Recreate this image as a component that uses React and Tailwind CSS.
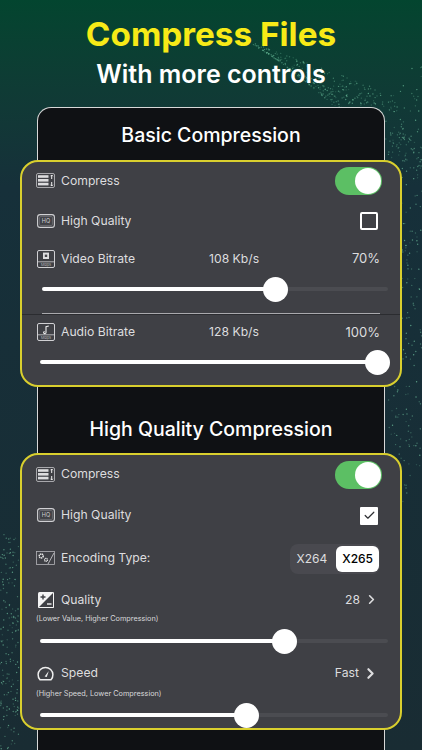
import { ChevronRight, Check } from 'lucide-react';

// Particle wave behind the phone frame
function makeDots() {
  const dots = [];
  const rnd = (n) => {
    const v = Math.sin(n * 127.1) * 43758.5453;
    return v - Math.floor(v);
  };
  for (let i = 0; i < 420; i++) {
    const t = rnd(i);
    const off = rnd(i + 500);
    // upper fan, runs from the title down to the right edge
    dots.push({
      x: 245 + t * 150 + off * 35,
      y: 40 + t * 55 + off * 70 * (0.3 + t),
      o: 0.15 + rnd(i + 900) * 0.4,
    });
  }
  for (let i = 0; i < 260; i++) {
    const t = rnd(i + 1300);
    const off = rnd(i + 1700);
    // right margin
    dots.push({
      x: 388 + off * 34,
      y: 110 + t * 420 - off * 60,
      o: 0.2 + rnd(i + 2100) * 0.45,
    });
  }
  for (let i = 0; i < 170; i++) {
    const t = rnd(i + 2600);
    const off = rnd(i + 3000);
    // left margin
    dots.push({
      x: off * 19,
      y: 530 + t * 220,
      o: 0.2 + rnd(i + 3400) * 0.45,
    });
  }
  return dots;
}

const DOTS = makeDots();

function CompressIcon() {
  return (
    <svg width="19" height="15" viewBox="0 0 19 15" fill="none" className="shrink-0">
      <rect x="0.5" y="0.5" width="18" height="14" rx="1.5" stroke="#b4b4b8" strokeWidth="0.9" />
      <rect x="2" y="2.2" width="10.5" height="2.6" fill="#dcdcde" />
      <rect x="2" y="6" width="10.5" height="2.6" fill="#dcdcde" />
      <rect x="2" y="9.8" width="10.5" height="2.6" fill="#dcdcde" />
      <path d="M15.7 2v4M14.6 3.2l1.1-1.2 1.1 1.2M15.7 9v4M14.6 11.8l1.1 1.2 1.1-1.2" stroke="#eee" strokeWidth="1" />
    </svg>
  );
}

function HqIcon() {
  return (
    <svg width="18" height="14" viewBox="0 0 18 14" fill="none" className="shrink-0">
      <rect x="0.6" y="0.6" width="16.8" height="12.8" rx="2.5" stroke="#d0d0d3" strokeWidth="1.1" />
      <rect x="2.6" y="2.6" width="12.8" height="8.8" rx="1" stroke="#85858a" strokeWidth="0.6" />
      <text x="9" y="9" textAnchor="middle" fontSize="5.5" fill="#d0d0d3" fontFamily="Inter, sans-serif">HQ</text>
    </svg>
  );
}

function BitrateIcon({ audio }) {
  return (
    <svg width="18" height="18" viewBox="0 0 18 18" fill="none" className="shrink-0">
      <rect x="0.5" y="0.5" width="17" height="17" rx="1.5" stroke="#d0d0d3" strokeWidth="1" />
      <path d="M0.5 11.8h17" stroke="#d0d0d3" strokeWidth="0.8" />
      {audio ? (
        <path d="M9 9.5V3.6l2.8-.6M9 9.5a1.2 1 0 1 1-1.3-.9" stroke="#eee" strokeWidth="1.1" />
      ) : (
        <>
          <rect x="6" y="2.6" width="6" height="6.4" fill="#dedee0" />
          <rect x="7.8" y="4.6" width="2.4" height="2.4" fill="#47474b" />
        </>
      )}
      <text x="9" y="16.2" textAnchor="middle" fontSize="3.8" fill="#b4b4b8" fontFamily="Inter, sans-serif">Mbps</text>
    </svg>
  );
}

function EncodingIcon() {
  return (
    <svg width="19" height="14" viewBox="0 0 19 14" fill="none" className="shrink-0">
      <rect x="0.5" y="0.5" width="18" height="13" stroke="#b4b4b8" strokeWidth="0.8" />
      <circle cx="5.2" cy="5" r="2" stroke="#eee" strokeWidth="1.5" strokeDasharray="1.3 0.5" />
      <circle cx="10" cy="8.8" r="1.5" stroke="#eee" strokeWidth="1.2" strokeDasharray="1 0.4" />
      <path d="M12 13 18 2" stroke="#c4c4c7" strokeWidth="0.9" />
    </svg>
  );
}

function QualityIcon() {
  return (
    <svg width="16" height="16" viewBox="0 0 16 16" fill="none" className="shrink-0">
      <rect width="16" height="16" rx="1.5" fill="#f4f4f4" />
      <path d="M0.5 15.5 15.5 0.5V15.5Z" fill="#3f4045" />
      <path d="M15.5 0.5V15.5H0.5" stroke="#f4f4f4" strokeWidth="1" />
      <path d="M2.5 5h5M5 2.5v5" stroke="#3f4045" strokeWidth="1.4" />
      <path d="M9 12h4.5" stroke="#f4f4f4" strokeWidth="1.4" />
    </svg>
  );
}

function SpeedIcon() {
  return (
    <svg width="17" height="15" viewBox="0 0 17 15" fill="none" className="shrink-0">
      <path d="M3 13.8A7.4 7.4 0 1 1 14 13.8Z" stroke="#eee" strokeWidth="1.5" strokeLinejoin="round" />
      <path d="M7.6 10.4 11.8 5l-2 6z" fill="#eee" />
    </svg>
  );
}

function Toggle() {
  return (
    <div className="w-[47px] h-[28px] rounded-full bg-[#5cbf64] flex items-center justify-end pr-[1px]">
      <div className="w-[26px] h-[26px] rounded-full bg-white" />
    </div>
  );
}

function Row({ icon, label, className, children }) {
  return (
    <div className={`flex items-center justify-between pl-[14px] pr-[18px] ${className}`}>
      <div className="flex items-center gap-[6px]">
        <div className="w-[19px] flex justify-center">{icon}</div>
        <span className="text-[12.2px] text-[#dddddf]">{label}</span>
      </div>
      {children}
    </div>
  );
}

function Slider({ fill, rest, className }) {
  return (
    <div className={`flex items-center h-[26px] ${className}`}>
      <div className={`h-[4px] bg-white rounded-l-full ${fill}`} />
      <div className="w-[25px] h-[25px] rounded-full bg-white shrink-0 -mx-[1px] z-10" />
      {rest && <div className={`h-[4px] bg-[#4b4c51] rounded-r-full ${rest}`} />}
    </div>
  );
}

function Panel({ className, children }) {
  return (
    <div className={`-mx-[18px] rounded-[18px] border-2 border-[#d9cf2e] bg-[#3f4045] relative ${className}`}>
      {children}
    </div>
  );
}

export default function App() {
  return (
    <div
      className="relative w-full h-[750px] overflow-hidden bg-gradient-to-b from-[#03452f] via-[#16303a] via-25% to-[#192c33]"
      style={{ fontFamily: 'Inter, "Liberation Sans", sans-serif' }}
    >
      <svg width="422" height="750" className="absolute inset-0">
        {DOTS.map((d, i) => (
          <circle key={i} cx={d.x} cy={d.y} r="0.7" fill="#7fd8b0" opacity={d.o} />
        ))}
      </svg>

      <div className="relative flex flex-col items-center">
        <h1 className="mt-[14px] text-[33.3px] leading-[40px] font-bold text-[#f7ea17]">Compress Files</h1>
        <h2 className="mt-[5px] text-[25px] leading-[30px] font-semibold text-white">With more controls</h2>

        <div className="mt-[18px] w-[348px] h-[700px] rounded-t-[14px] border border-[#d8d8d8] border-b-0 bg-[#0f1114]">
          <div className="h-[52px] flex items-center justify-center pt-[4px] text-[19.5px] font-medium text-white">
            Basic Compression
          </div>

          <Panel className="h-[227px]">
            <Row icon={<CompressIcon />} label="Compress" className="h-[38px]">
              <Toggle />
            </Row>
            <Row icon={<HqIcon />} label="High Quality" className="h-[41px] pt-[1px]">
              <div className="w-[18px] h-[18px] border-2 border-white rounded-[2px] mr-[4px]" />
            </Row>
            <Row icon={<BitrateIcon />} label="Video Bitrate" className="h-[35px] pt-[1px]">
              <span className="ml-[74px] text-[12.2px] text-[#dddddf]">108 Kb/s</span>
              <span className="ml-auto mr-[2px] text-[13px] text-[#dddddf]">70%</span>
            </Row>
            <Slider fill="w-[222px]" rest="w-[101px]" className="ml-[20px]" />
            <div className="h-[1px] mt-[11px] ml-[20px] mr-[20px] bg-[#a9a9ad]" />
            <div className="h-[1px] bg-[#2b2c30]" />
            <Row icon={<BitrateIcon audio />} label="Audio Bitrate" className="h-[34px] pt-[1px]">
              <span className="ml-[74px] text-[12.2px] text-[#dddddf]">128 Kb/s</span>
              <span className="ml-auto mr-[2px] text-[13px] text-[#dddddf]">100%</span>
            </Row>
            <Slider fill="w-[326px]" className="ml-[18px]" />
          </Panel>

          <div className="h-[66px] flex items-center justify-center pt-[20px] text-[19.5px] font-medium text-white">
            High Quality Compression
          </div>

          <Panel className="h-[277px]">
            <Row icon={<CompressIcon />} label="Compress" className="h-[38px] pt-[1px]">
              <Toggle />
            </Row>
            <Row icon={<HqIcon />} label="High Quality" className="h-[41px] pt-[4px]">
              <div className="w-[18px] h-[18px] bg-white rounded-[1px] mr-[4px] flex items-center justify-center">
                <Check size={13} strokeWidth={2.2} className="text-[#2f3034]" />
              </div>
            </Row>
            <Row icon={<EncodingIcon />} label="Encoding Type:" className="h-[45px] pt-[4px]">
              <div className="flex items-center h-[30px] rounded-[8px] bg-[#49494f] pl-[7px] pr-[1px] gap-[9px] mr-[2px]">
                <span className="text-[12px] text-[#dddddf]">X264</span>
                <span className="h-[26px] px-[6px] flex items-center rounded-[6px] bg-white text-[12px] font-medium text-black">X265</span>
              </div>
            </Row>
            <Row icon={<QualityIcon />} label="Quality" className="h-[35px] pt-[7px]">
              <span className="flex items-center gap-[4px] text-[12.2px] text-[#dddddf] mr-[3px]">
                28 <ChevronRight size={15} strokeWidth={2.6} />
              </span>
            </Row>
            <p className="pl-[14px] text-[7.3px] leading-[10px] text-[#d8d8da]">(Lower Value, Higher Compression)</p>
            <Slider fill="w-[233px]" rest="w-[92px]" className="ml-[18px] mt-[4px]" />
            <Row icon={<SpeedIcon />} label="Speed" className="h-[31px] mt-[4px]">
              <span className="flex items-center gap-[3px] text-[12.2px] text-[#dddddf] mr-[3px]">
                Fast <ChevronRight size={17} strokeWidth={3} />
              </span>
            </Row>
            <p className="pl-[14px] text-[7.3px] leading-[10px] text-[#d8d8da]">(Higher Speed, Lower Compression)</p>
            <Slider fill="w-[195px]" rest="w-[130px]" className="ml-[18px] mt-[3px]" />
          </Panel>
        </div>
      </div>
    </div>
  );
}
